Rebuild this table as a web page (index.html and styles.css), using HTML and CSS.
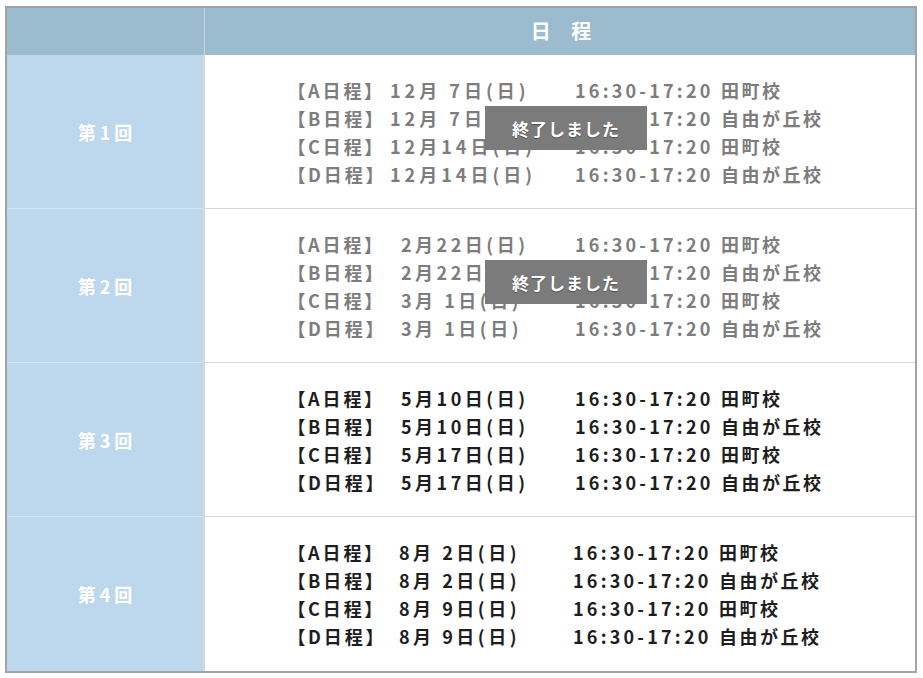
FILE: index.html
```html
<!DOCTYPE html>
<html lang="ja">
<head>
<meta charset="utf-8">
<link rel="stylesheet" href="styles.css">
</head>
<body>
<div class="table">
  <div class="head-left"></div>
  <div class="head-right">日 程</div>

  <div class="round">第1回</div>
  <div class="cell past">
    <div class="lines">
      <div class="line r1"><span class="lab">【A日程】</span><span class="date">12月&nbsp;7日(日)</span><span class="time">16:30-17:20</span><span class="place">田町校</span></div>
      <div class="line r1"><span class="lab">【B日程】</span><span class="date">12月&nbsp;7日(日)</span><span class="time">16:30-17:20</span><span class="place">自由が丘校</span></div>
      <div class="line r1"><span class="lab">【C日程】</span><span class="date">12月14日(日)</span><span class="time">16:30-17:20</span><span class="place">田町校</span></div>
      <div class="line r1"><span class="lab">【D日程】</span><span class="date">12月14日(日)</span><span class="time">16:30-17:20</span><span class="place">自由が丘校</span></div>
    </div>
    <div class="done">終了しました</div>
  </div>

  <div class="round">第2回</div>
  <div class="cell past">
    <div class="lines">
      <div class="line"><span class="lab">【A日程】</span><span class="date">2月22日(日)</span><span class="time">16:30-17:20</span><span class="place">田町校</span></div>
      <div class="line"><span class="lab">【B日程】</span><span class="date">2月22日(日)</span><span class="time">16:30-17:20</span><span class="place">自由が丘校</span></div>
      <div class="line"><span class="lab">【C日程】</span><span class="date">3月&nbsp;1日(日)</span><span class="time">16:30-17:20</span><span class="place">田町校</span></div>
      <div class="line"><span class="lab">【D日程】</span><span class="date">3月&nbsp;1日(日)</span><span class="time">16:30-17:20</span><span class="place">自由が丘校</span></div>
    </div>
    <div class="done">終了しました</div>
  </div>

  <div class="round">第3回</div>
  <div class="cell">
    <div class="lines">
      <div class="line"><span class="lab">【A日程】</span><span class="date">5月10日(日)</span><span class="time">16:30-17:20</span><span class="place">田町校</span></div>
      <div class="line"><span class="lab">【B日程】</span><span class="date">5月10日(日)</span><span class="time">16:30-17:20</span><span class="place">自由が丘校</span></div>
      <div class="line"><span class="lab">【C日程】</span><span class="date">5月17日(日)</span><span class="time">16:30-17:20</span><span class="place">田町校</span></div>
      <div class="line"><span class="lab">【D日程】</span><span class="date">5月17日(日)</span><span class="time">16:30-17:20</span><span class="place">自由が丘校</span></div>
    </div>
  </div>

  <div class="round last">第4回</div>
  <div class="cell last">
    <div class="lines">
      <div class="line r4"><span class="lab">【A日程】</span><span class="date">8月&nbsp;2日(日)</span><span class="time">16:30-17:20</span><span class="place">田町校</span></div>
      <div class="line r4"><span class="lab">【B日程】</span><span class="date">8月&nbsp;2日(日)</span><span class="time">16:30-17:20</span><span class="place">自由が丘校</span></div>
      <div class="line r4"><span class="lab">【C日程】</span><span class="date">8月&nbsp;9日(日)</span><span class="time">16:30-17:20</span><span class="place">田町校</span></div>
      <div class="line r4"><span class="lab">【D日程】</span><span class="date">8月&nbsp;9日(日)</span><span class="time">16:30-17:20</span><span class="place">自由が丘校</span></div>
    </div>
  </div>
</div>
</body>
</html>
```

FILE: styles.css
```css
html, body {
  margin: 0;
  padding: 0;
  background: #ffffff;
}
body {
  padding: 6px 0 0 5px;
  font-family: "Noto Sans CJK JP", "Noto Sans", sans-serif;
}
.table {
  width: 908px;
  border: 2px solid #a3a3a3;
  display: grid;
  grid-template-columns: 198px 1fr;
  grid-template-rows: 47px repeat(4, 154px);
  box-sizing: content-box;
}
.head-left {
  background: #9bbbce;
  border-right: 1px solid #c4d8e4;
}
.head-right {
  background: #9bbbce;
  color: #ffffff;
  font-weight: 700;
  font-size: 20px;
  letter-spacing: 8px;
  display: flex;
  align-items: center;
  justify-content: center;
  padding-left: 10px;
  padding-bottom: 2px;
}
.round {
  background: #bdd7ed;
  color: #ffffff;
  font-weight: 700;
  font-size: 18px;
  display: flex;
  align-items: center;
  justify-content: center;
  border-right: 2px solid #d6d9dc;
  border-bottom: 1px solid #d4e3f0;
  letter-spacing: 4px;
  padding-left: 4px;
}
.cell {
  position: relative;
  border-bottom: 1px solid #d8d8d8;
  display: flex;
  align-items: center;
  justify-content: flex-start;
  color: #1e1e1e;
}
.round.last, .cell.last {
  border-bottom: none;
}
.cell.past {
  color: #7d7d7d;
}
.lines {
  display: flex;
  flex-direction: column;
  padding-left: 91px;
}
.line {
  display: flex;
  height: 28px;
  align-items: center;
  font-size: 18px;
  font-weight: 700;
  white-space: nowrap;
}
.lab {
  width: 105px;
  letter-spacing: 3px;
  font-feature-settings: "palt";
}
.date {
  width: 174px;
  letter-spacing: 3.5px;
}
.time {
  width: 146px;
  letter-spacing: 3.2px;
}
.place {
  letter-spacing: 2.5px;
}
.line.r1 .lab {
  width: 94px;
}
.line.r1 .date {
  width: 185px;
  letter-spacing: 4px;
}
.line.r4 .lab {
  width: 103px;
}
.line.r4 .date {
  width: 174px;
}
.done {
  position: absolute;
  left: 280px;
  top: 51px;
  width: 162px;
  height: 44px;
  background: #7b7b7b;
  color: #ffffff;
  font-size: 17px;
  font-weight: 700;
  letter-spacing: 1px;
  display: flex;
  align-items: center;
  justify-content: center;
  text-shadow: 0 1px 1px rgba(0,0,0,0.35);
}
```
